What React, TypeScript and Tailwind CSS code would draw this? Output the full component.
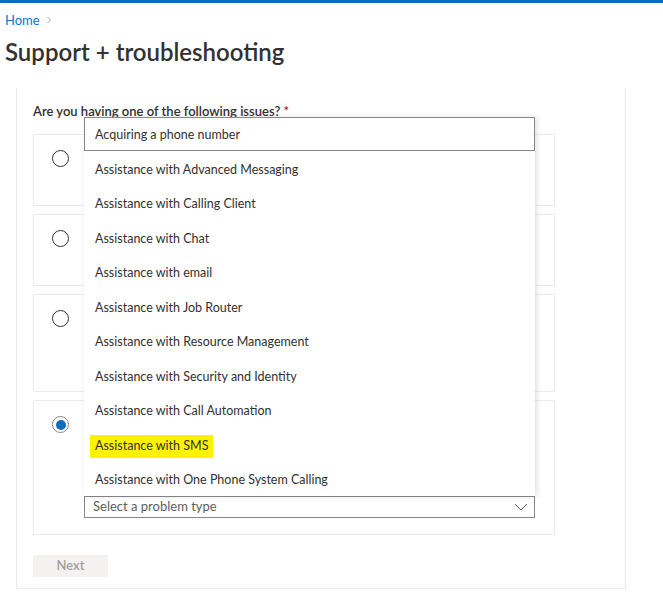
import React from 'react';

const issues = [
  'Assistance with Advanced Messaging',
  'Assistance with Calling Client',
  'Assistance with Chat',
  'Assistance with email',
  'Assistance with Job Router',
  'Assistance with Resource Management',
  'Assistance with Security and Identity',
  'Assistance with Call Automation',
  'Assistance with SMS',
  'Assistance with One Phone System Calling',
];

function Radio({ checked = false }: { checked?: boolean }) {
  return (
    <span
      className={`flex h-[17px] w-[17px] shrink-0 items-center justify-center rounded-full border ${
        checked ? 'border-[#8a8886]' : 'border-[#323130]'
      } bg-white`}
    >
      {checked && <span className="h-[10px] w-[10px] rounded-full bg-[#0f6cbd]" />}
    </span>
  );
}

function Card({ height, checked, children }: { height: string; checked?: boolean; children?: React.ReactNode }) {
  return (
    <div className={`flex w-[522px] gap-[15px] border border-[#edebe9] bg-white pt-[15px] pl-[18px] ${height}`}>
      <Radio checked={checked} />
      {children}
    </div>
  );
}

export default function App() {
  return (
    <div className="min-h-[607px] bg-white font-['Segoe_UI','Lato',sans-serif] text-[13px] text-[#323130]">
      <div className="h-[3px] bg-[#0f6cbd]" />

      {/* Breadcrumb and title */}
      <div className="px-[5px]">
        <div className="mt-[8px] flex items-center gap-[5px] leading-[18px] text-[#0078d4]">
          <span>Home</span>
          <svg width="8" height="8" viewBox="0 0 8 8" className="text-[#a19f9d]">
            <path d="M2.5 1 L5.5 4 L2.5 7" fill="none" stroke="currentColor" strokeWidth="1" />
          </svg>
        </div>
        <h1 className="mt-[7px] text-[24px] leading-[32px] font-semibold">Support + troubleshooting</h1>
      </div>

      {/* Panel */}
      <div className="mt-[20px] ml-[16px] w-[610px] border-x border-b border-[#edebe9] pt-[14px] pb-[11px] pl-[16px]">
        <p className="leading-[18px] font-semibold">
          Are you having one of the following issues? <span className="text-[#a4262c]">*</span>
        </p>

        <div className="mt-[14px] flex flex-col gap-[8px]">
          <Card height="h-[72px]" />
          <Card height="h-[72px]" />
          <Card height="h-[98px]" />
          <Card height="h-[135px]" checked>
            <div className="flex flex-1 flex-col justify-end pr-[19px] pb-[16px]">
              <div className="relative">
                {/* Open dropdown menu */}
                <div className="absolute bottom-full left-0 right-0 z-10 bg-white text-[12.5px] shadow-[2px_0_6px_rgba(0,0,0,0.12)]">
                  <div className="flex h-[34px] items-center border border-[#8a8886] pt-[3px] pl-[10px]">
                    Acquiring a phone number
                  </div>
                  <ul className="flex flex-col">
                    {issues.map((item) => (
                      <li key={item} className="flex h-[34.5px] items-center pt-[4px] pl-[11px]">
                        {item === 'Assistance with SMS' ? (
                          <span className="-ml-[5px] bg-[#fff200] px-[5px] py-[2px]">{item}</span>
                        ) : (
                          item
                        )}
                      </li>
                    ))}
                  </ul>
                </div>

                <div className="flex h-[22px] items-center justify-between border border-[#8a8886] pr-[6px] pl-[8px] text-[#605e5c]">
                  <span>Select a problem type</span>
                  <svg width="14" height="8" viewBox="0 0 14 8" className="text-[#605e5c]">
                    <path d="M1 1 L7 7 L13 1" fill="none" stroke="currentColor" strokeWidth="1" />
                  </svg>
                </div>
              </div>
            </div>
          </Card>
        </div>

        <button className="mt-[20px] h-[22px] w-[75px] bg-[#f3f2f1] text-[13px] font-semibold text-[#a19f9d]">
          Next
        </button>
      </div>
    </div>
  );
}
